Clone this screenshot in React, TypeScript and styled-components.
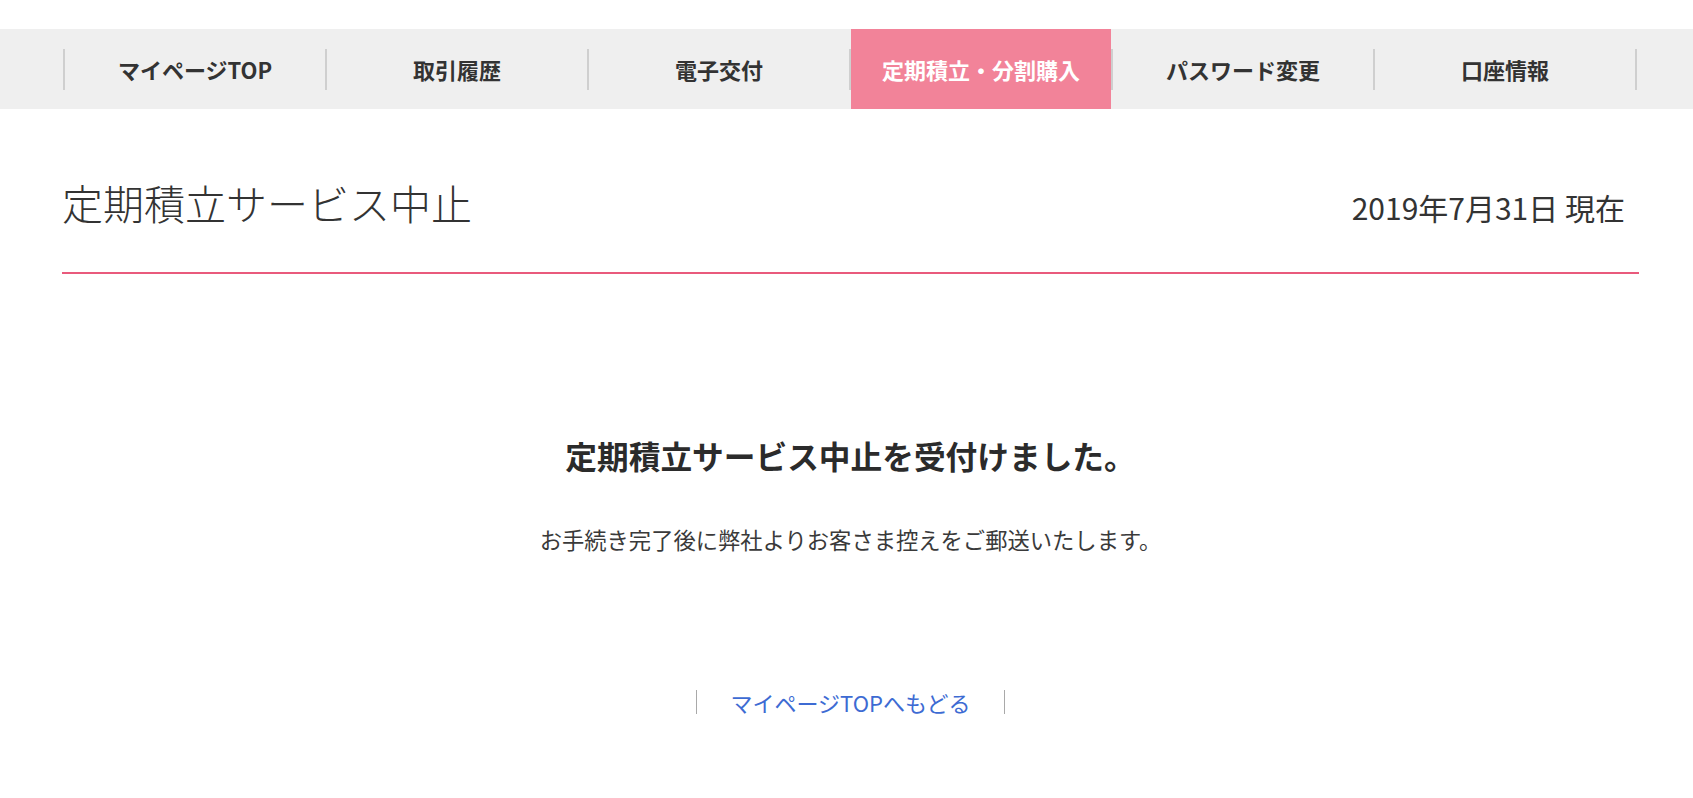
import React from "react";
import styled, { createGlobalStyle } from "styled-components";

const GlobalStyle = createGlobalStyle`
  html, body {
    margin: 0;
    padding: 0;
    background: #ffffff;
    font-family: "Noto Sans CJK JP", "Noto Sans", sans-serif;
    color: #333333;
  }
`;

const Page = styled.div`
  padding-top: 29px;
`;

const NavBar = styled.nav`
  background: #efefef;
  height: 80px;
`;

const NavList = styled.ul`
  list-style: none;
  margin: 0 0 0 63px;
  padding: 0;
  width: 1574px;
  height: 100%;
  display: flex;
  align-items: center;
`;

const Separator = styled.li`
  flex: 0 0 2px;
  height: 41px;
  background: #cfcfcf;
`;

const NavItem = styled.li<{ $active?: boolean }>`
  flex: 1;
  height: 100%;
  display: flex;
  align-items: center;
  justify-content: center;
  font-size: 22px;
  font-weight: 700;
  color: ${(p) => (p.$active ? "#ffffff" : "#333333")};
  background: ${(p) => (p.$active ? "#f28399" : "transparent")};
  white-space: nowrap;
`;

const Main = styled.main`
  margin-left: 62px;
  width: 1577px;
`;

const TitleRow = styled.div`
  display: flex;
  justify-content: space-between;
  align-items: baseline;
  padding: 63px 14px 40px 0;
  border-bottom: 2px solid #e95a7c;
`;

const Title = styled.h1`
  margin: 0;
  font-size: 41px;
  line-height: 60px;
  font-weight: 300;
  color: #333333;
`;

const DateText = styled.div`
  font-size: 30px;
  line-height: 40px;
  color: #333333;
`;

const Message = styled.section`
  display: flex;
  flex-direction: column;
  align-items: center;
  padding-top: 158px;
`;

const Heading = styled.h2`
  margin: 0;
  font-size: 31.7px;
  line-height: 46px;
  font-weight: 700;
  color: #2b2b2b;
`;

const SubText = styled.p`
  margin: 45px 0 0;
  font-size: 22.3px;
  line-height: 32px;
  color: #3a3a3a;
`;

const LinkRow = styled.div`
  margin-top: 131px;
  display: flex;
  align-items: center;
  gap: 34px;
`;

const Bar = styled.span`
  display: block;
  width: 1px;
  height: 24px;
  background: #a9a9a9;
`;

const BackLink = styled.a`
  font-size: 22px;
  line-height: 32px;
  color: #3d6bd3;
  text-decoration: none;
`;

const navItems = [
  "マイページTOP",
  "取引履歴",
  "電子交付",
  "定期積立・分割購入",
  "パスワード変更",
  "口座情報",
];

export default function App() {
  return (
    <Page>
      <GlobalStyle />
      <NavBar>
        <NavList>
          {navItems.map((label, i) => (
            <React.Fragment key={label}>
              <Separator />
              <NavItem $active={i === 3}>{label}</NavItem>
            </React.Fragment>
          ))}
          <Separator />
        </NavList>
      </NavBar>
      <Main>
        <TitleRow>
          <Title>定期積立サービス中止</Title>
          <DateText>2019年7月31日 現在</DateText>
        </TitleRow>
        <Message>
          <Heading>定期積立サービス中止を受付けました。</Heading>
          <SubText>お手続き完了後に弊社よりお客さま控えをご郵送いたします。</SubText>
          <LinkRow>
            <Bar />
            <BackLink href="#">マイページTOPへもどる</BackLink>
            <Bar />
          </LinkRow>
        </Message>
      </Main>
    </Page>
  );
}
